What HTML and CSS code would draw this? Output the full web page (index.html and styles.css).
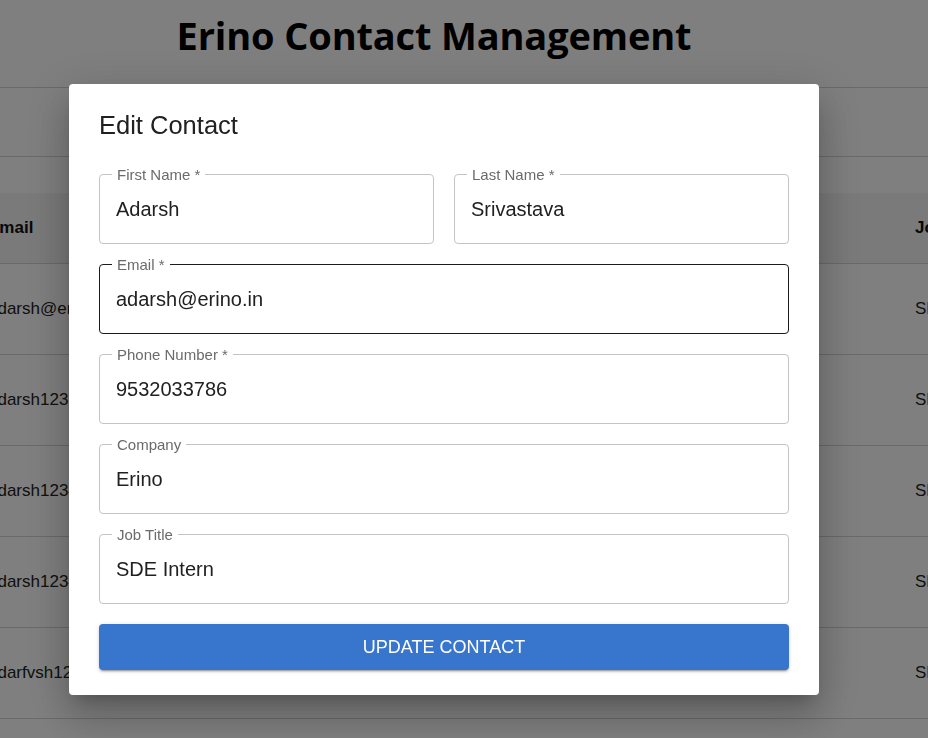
FILE: index.html
```html
<!DOCTYPE html>
<html lang="en">
<head>
<meta charset="utf-8">
<title>Erino Contact Management</title>
<link rel="stylesheet" href="styles.css">
</head>
<body>
<div class="page">
  <header class="top">
    <h1 class="app-title">Erino Contact Management</h1>
  </header>
  <div class="toolbar"></div>
  <div class="table-wrap">
    <div class="trow thead">
      <div class="cell">Email</div>
      <div class="cell"></div>
      <div class="cell">Job Title</div>
    </div>
    <div class="trow">
      <div class="cell">adarsh@erino.in</div>
      <div class="cell"></div>
      <div class="cell">SDE Intern</div>
    </div>
    <div class="trow">
      <div class="cell">adarsh123@gmail.com</div>
      <div class="cell"></div>
      <div class="cell">SDE Intern</div>
    </div>
    <div class="trow">
      <div class="cell">adarsh1234@gmail.com</div>
      <div class="cell"></div>
      <div class="cell">SDE Intern</div>
    </div>
    <div class="trow">
      <div class="cell">adarsh12345@gmail.com</div>
      <div class="cell"></div>
      <div class="cell">SDE Intern</div>
    </div>
    <div class="trow">
      <div class="cell">adarfvsh123@gmail.com</div>
      <div class="cell"></div>
      <div class="cell">SDE Intern</div>
    </div>
  </div>
</div>

<div class="backdrop"></div>

<div class="dialog" role="dialog" aria-labelledby="dlg-title">
  <h2 class="dialog-title" id="dlg-title">Edit Contact</h2>
  <div class="form">
    <div class="form-row">
      <div class="field">
        <span class="field-label">First Name *</span>
        <span class="field-value">Adarsh</span>
      </div>
      <div class="field">
        <span class="field-label">Last Name *</span>
        <span class="field-value">Srivastava</span>
      </div>
    </div>
    <div class="field field-hover">
      <span class="field-label">Email *</span>
      <span class="field-value">adarsh@erino.in</span>
    </div>
    <div class="field">
      <span class="field-label">Phone Number *</span>
      <span class="field-value">9532033786</span>
    </div>
    <div class="field">
      <span class="field-label">Company</span>
      <span class="field-value">Erino</span>
    </div>
    <div class="field">
      <span class="field-label">Job Title</span>
      <span class="field-value">SDE Intern</span>
    </div>
    <button class="btn-primary" type="button">UPDATE CONTACT</button>
  </div>
</div>
</body>
</html>
```

FILE: styles.css
```css
html, body {
  margin: 0;
  padding: 0;
}

body {
  font-family: "Liberation Sans", Arial, sans-serif;
  background: #ffffff;
  color: #222222;
  overflow: hidden;
  width: 928px;
  height: 738px;
}

.page {
  width: 928px;
}

.top {
  border-bottom: 1px solid #d4d4d4;
  padding: 12px 60px 29px 0;
  text-align: center;
}

.app-title {
  margin: 0;
  font-family: "Open Sans", "DejaVu Sans", sans-serif;
  font-weight: 700;
  font-size: 38px;
  line-height: 46px;
  color: #000000;
  letter-spacing: -0.15px;
}

.toolbar {
  height: 68px;
  border-bottom: 1px solid #d4d4d4;
  margin-bottom: 36px;
}

.table-wrap {
  margin-left: -28px;
  width: 1100px;
}

.trow {
  display: grid;
  grid-template-columns: 100px 827px 173px;
  height: 90px;
  align-items: center;
  border-bottom: 1px solid #d4d4d4;
  font-size: 17px;
  color: #222222;
}

.trow.thead {
  height: 70px;
  background: #f4f4f4;
  font-weight: 700;
  color: #111111;
}

.cell {
  padding-left: 16px;
  white-space: nowrap;
  overflow: hidden;
}

.backdrop {
  position: fixed;
  inset: 0;
  background: rgba(0, 0, 0, 0.5);
}

.dialog {
  position: fixed;
  left: 69px;
  top: 84px;
  width: 690px;
  padding: 25px 30px 25px;
  background: #ffffff;
  border-radius: 4px;
  box-shadow: 0 11px 15px -7px rgba(0, 0, 0, 0.2),
              0 24px 38px 3px rgba(0, 0, 0, 0.14),
              0 9px 46px 8px rgba(0, 0, 0, 0.12);
}

.dialog-title {
  margin: 0 0 33px;
  font-size: 25.5px;
  line-height: 32px;
  font-weight: 400;
  color: #212121;
}

.form {
  display: flex;
  flex-direction: column;
  gap: 20px;
}

.form-row {
  display: grid;
  grid-template-columns: 1fr 1fr;
  gap: 20px;
}

.field {
  position: relative;
  height: 68px;
  border: 1px solid #c4c4c4;
  border-radius: 4px;
  display: flex;
  align-items: center;
  padding: 0 16px;
}

.field-hover {
  border-color: #1c1c1c;
}

.field-label {
  position: absolute;
  top: -9px;
  left: 12px;
  padding: 0 5px;
  background: #ffffff;
  font-size: 15px;
  line-height: 17px;
  color: #6b6b6b;
  white-space: nowrap;
}

.field-value {
  font-size: 20px;
  color: #212121;
}

.btn-primary {
  height: 46px;
  border: none;
  border-radius: 4px;
  background: #3875cc;
  color: #ffffff;
  font-family: "Liberation Sans", Arial, sans-serif;
  font-size: 18px;
  cursor: pointer;
  box-shadow: 0 3px 1px -2px rgba(0, 0, 0, 0.2),
              0 2px 2px 0 rgba(0, 0, 0, 0.14),
              0 1px 5px 0 rgba(0, 0, 0, 0.12);
}
```
